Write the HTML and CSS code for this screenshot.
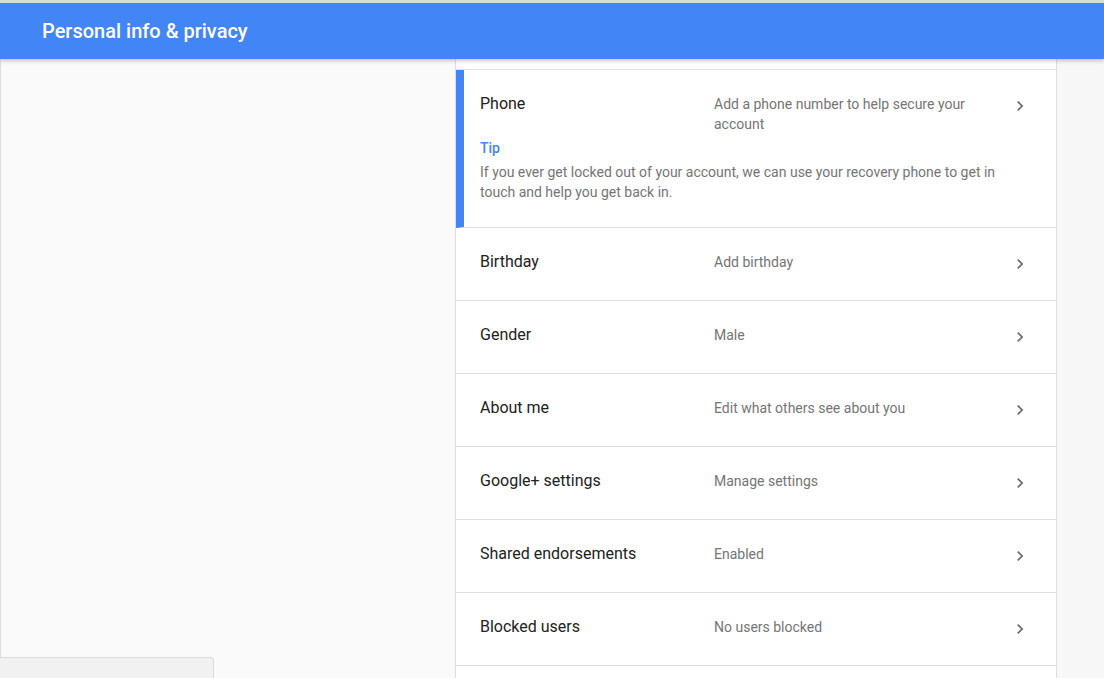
FILE: index.html
```html
<!DOCTYPE html>
<html lang="en">
<head>
   <meta charset="UTF-8">
   <title>Personal info &amp; privacy</title>
   <link rel="stylesheet" href="styles.css">
</head>

<body>

<div class="topbar">
   <h1 class="title">Personal info &amp; privacy</h1>
</div>

<div class="page">
   <div class="side"></div>

   <div class="card">
      <div class="row-tail"></div>

      <div class="row row-tip">
         <div class="row-main">
            <span class="label">Phone</span>
            <span class="value">Add a phone number to help secure your account</span>
            <svg class="chev" viewBox="0 0 24 24" width="20" height="20"><path d="M10 6L8.59 7.41 13.17 12l-4.58 4.59L10 18l6-6z"/></svg>
         </div>
         <div class="tip">Tip</div>
         <p class="tip-text">If you ever get locked out of your account, we can use your recovery phone to get in touch and help you get back in.</p>
      </div>

      <div class="row">
         <div class="row-main">
            <span class="label">Birthday</span>
            <span class="value">Add birthday</span>
            <svg class="chev" viewBox="0 0 24 24" width="20" height="20"><path d="M10 6L8.59 7.41 13.17 12l-4.58 4.59L10 18l6-6z"/></svg>
         </div>
      </div>

      <div class="row">
         <div class="row-main">
            <span class="label">Gender</span>
            <span class="value">Male</span>
            <svg class="chev" viewBox="0 0 24 24" width="20" height="20"><path d="M10 6L8.59 7.41 13.17 12l-4.58 4.59L10 18l6-6z"/></svg>
         </div>
      </div>

      <div class="row">
         <div class="row-main">
            <span class="label">About me</span>
            <span class="value">Edit what others see about you</span>
            <svg class="chev" viewBox="0 0 24 24" width="20" height="20"><path d="M10 6L8.59 7.41 13.17 12l-4.58 4.59L10 18l6-6z"/></svg>
         </div>
      </div>

      <div class="row">
         <div class="row-main">
            <span class="label">Google+ settings</span>
            <span class="value">Manage settings</span>
            <svg class="chev" viewBox="0 0 24 24" width="20" height="20"><path d="M10 6L8.59 7.41 13.17 12l-4.58 4.59L10 18l6-6z"/></svg>
         </div>
      </div>

      <div class="row">
         <div class="row-main">
            <span class="label">Shared endorsements</span>
            <span class="value">Enabled</span>
            <svg class="chev" viewBox="0 0 24 24" width="20" height="20"><path d="M10 6L8.59 7.41 13.17 12l-4.58 4.59L10 18l6-6z"/></svg>
         </div>
      </div>

      <div class="row">
         <div class="row-main">
            <span class="label">Blocked users</span>
            <span class="value">No users blocked</span>
            <svg class="chev" viewBox="0 0 24 24" width="20" height="20"><path d="M10 6L8.59 7.41 13.17 12l-4.58 4.59L10 18l6-6z"/></svg>
         </div>
      </div>

      <div class="row"></div>
   </div>

   <div class="aside"></div>
</div>

<div class="drawer"></div>

</body>
</html>
```

FILE: styles.css
```css
html {
   height: 100%;
   overflow: hidden;
}

body {
   margin: 0;
   height: 100%;
   font-family: Roboto, "Liberation Sans", sans-serif;
   background: #fafafa;
   overflow: hidden;
}

.topbar {
   position: relative;
   z-index: 2;
   height: 56px;
   border-top: 3px solid #dadada;
   background: #4285f4;
   box-shadow: 0 2px 4px rgba(0, 0, 0, 0.22);
   display: flex;
   align-items: center;
   padding-left: 42px;
}

.title {
   margin: 0;
   color: #fff;
   font-size: 20px;
   font-weight: 500;
}

.page {
   display: flex;
   height: 619px;
   overflow: hidden;
}

.side {
   width: 454px;
   border-left: 1px solid #dcdcdc;
   background: #fafafa;
}

.aside {
   flex: 1;
   background: #f7f7f7;
}

.card {
   width: 600px;
   background: #fff;
   border-left: 1px solid #dedede;
   border-right: 1px solid #dedede;
   box-shadow: 1px 0 2px rgba(0, 0, 0, 0.08);
}

.row-tail {
   height: 10px;
   border-bottom: 1px solid #e0e0e0;
}

.row {
   padding: 24px 24px 28px;
   border-bottom: 1px solid #e0e0e0;
   line-height: 20px;
}

.row-tip {
   padding: 24px 24px 25px 16px;
   border-left: 8px solid #4285f4;
}

.row-main {
   display: grid;
   grid-template-columns: 234px 1fr 24px;
   align-items: start;
}

.label {
   font-size: 16px;
   color: #212121;
}

.value {
   font-size: 14px;
   color: #757575;
   padding-right: 8px;
}

.chev {
   fill: #6b6b6b;
   justify-self: center;
   margin: 2px 0 -2px;
}

.tip {
   margin-top: 4px;
   font-size: 14px;
   font-weight: 500;
   color: #4285f4;
}

.tip-text {
   margin: 4px 0 0;
   font-size: 14px;
   color: #757575;
   max-width: 548px;
}

.drawer {
   position: fixed;
   left: 0;
   bottom: 0;
   width: 213px;
   height: 20px;
   background: #f1f1f1;
   border: 1px solid #d9d9d9;
   border-left: none;
   border-bottom: none;
   border-top-right-radius: 4px;
}
```
